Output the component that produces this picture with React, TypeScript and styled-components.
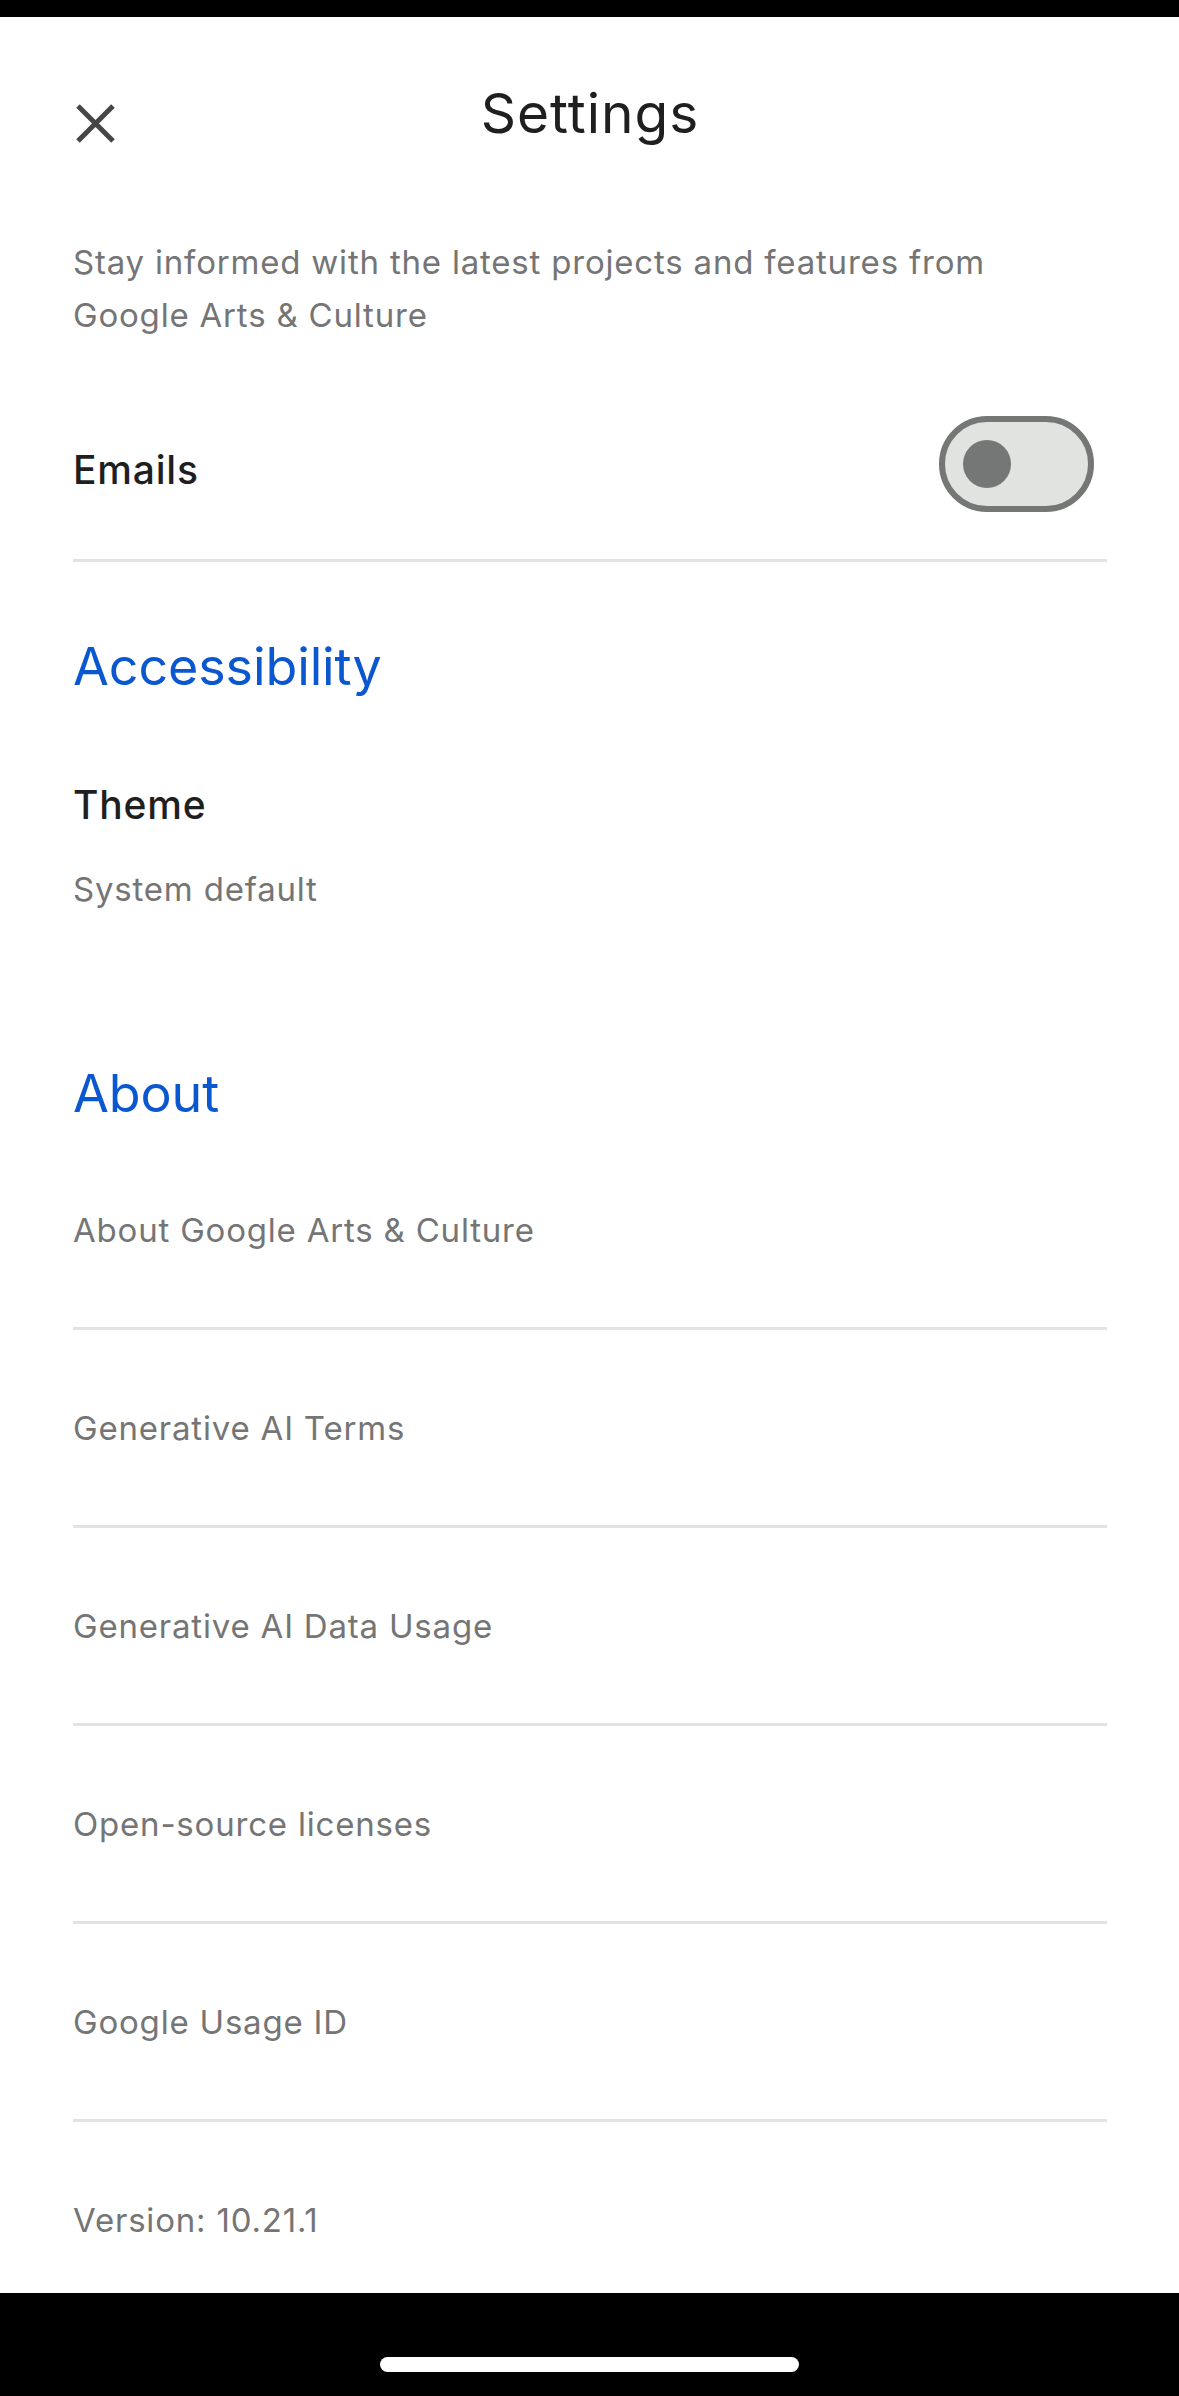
import styled, { createGlobalStyle } from 'styled-components';

const GlobalStyle = createGlobalStyle`
    html, body {
        margin: 0;
        padding: 0;
        background: #000;
    }
    body {
        font-family: Inter, "Noto Sans", sans-serif;
        -webkit-font-smoothing: antialiased;
    }
`;

const Screen = styled.div`
    width: 1179px;
    height: 2396px;
    display: flex;
    flex-direction: column;
    background-color: #ffffff;
    overflow: hidden;
`;
const StatusBar = styled.div`
    height: 17px;
    flex-shrink: 0;
    background-color: #000;
`;
const Content = styled.div`
    flex: 1;
    overflow: hidden;
    display: flex;
    flex-direction: column;
    padding: 0 72px 0 73px;
`;
const Header = styled.header`
    display: grid;
    grid-template-columns: 1fr auto 1fr;
    align-items: start;
    padding-top: 63px;
`;
const CloseButton = styled.button`
    justify-self: start;
    margin: 24px 0 0 3px;
    padding: 0;
    width: 39px;
    height: 39px;
    border: none;
    background: none;
    display: flex;
    cursor: pointer;
`;
const Title = styled.h1`
    margin: 0;
    font-size: 55px;
    line-height: 66px;
    font-weight: 400;
    color: #1f1f1f;
    letter-spacing: 1px;
`;
const Intro = styled.p`
    margin: 90px 0 0;
    max-width: 960px;
    font-size: 33px;
    line-height: 53px;
    color: #757575;
    letter-spacing: 0.8px;
`;
const ToggleRow = styled.div`
    display: flex;
    align-items: center;
    justify-content: space-between;
    margin-top: 74px;
    padding-bottom: 47px;
    border-bottom: 3px solid #e3e3e3;
`;
const RowLabel = styled.span`
    font-size: 39px;
    line-height: 48px;
    font-weight: 500;
    color: #1f1f1f;
    padding-top: 12px;
    letter-spacing: 0.8px;
`;
const Switch = styled.div<{ on?: boolean }>`
    box-sizing: border-box;
    width: 155px;
    height: 96px;
    margin-right: 13px;
    border-radius: 48px;
    border: 6px solid #747775;
    background-color: #e1e3e1;
    display: flex;
    align-items: center;
    justify-content: ${(props) => (props.on ? 'flex-end' : 'flex-start')};
    padding: 0 18px;
`;
const Knob = styled.div`
    width: 48px;
    height: 48px;
    border-radius: 50%;
    background-color: #747775;
`;
const SectionTitle = styled.h2<{ gap: number }>`
    margin: ${(props) => props.gap}px 0 0;
    font-size: 52px;
    line-height: 63px;
    font-weight: 400;
    color: #0b57d0;
    letter-spacing: -0.1px;
`;
const Setting = styled.div`
    margin-top: 83px;
    display: flex;
    flex-direction: column;
    gap: 40px;
`;
const SettingName = styled.span`
    font-size: 39px;
    line-height: 48px;
    font-weight: 500;
    color: #1f1f1f;
    letter-spacing: 0.8px;
`;
const SettingValue = styled.span`
    font-size: 33px;
    line-height: 40px;
    color: #757575;
    letter-spacing: 0.8px;
`;
const LinkList = styled.div`
    margin-top: 7px;
    display: flex;
    flex-direction: column;
`;
const LinkRow = styled.div<{ last?: boolean }>`
    height: 195px;
    flex-shrink: 0;
    display: flex;
    align-items: center;
    font-size: 33px;
    line-height: 40px;
    color: #757575;
    letter-spacing: 0.8px;
    border-bottom: ${(props) => (props.last ? 'none' : '3px solid #e3e3e3')};
`;
const NavBar = styled.div`
    height: 103px;
    flex-shrink: 0;
    background-color: #000;
    display: flex;
    justify-content: center;
    padding-top: 64px;
    box-sizing: border-box;
`;
const HomePill = styled.div`
    width: 419px;
    height: 15px;
    border-radius: 8px;
    background-color: #fff;
`;

const links = [
    'About Google Arts & Culture',
    'Generative AI Terms',
    'Generative AI Data Usage',
    'Open-source licenses',
    'Google Usage ID',
];

function App() {
    return (
        <>
            <GlobalStyle />
            <Screen>
                <StatusBar />
                <Content>
                    <Header>
                        <CloseButton aria-label="Close">
                            <svg width="39" height="39" viewBox="0 0 39 39">
                                <path d="M2 2 L37 37 M37 2 L2 37" stroke="#444746" strokeWidth="5" />
                            </svg>
                        </CloseButton>
                        <Title>Settings</Title>
                        <div />
                    </Header>
                    <Intro>Stay informed with the latest projects and features from Google Arts &amp; Culture</Intro>
                    <ToggleRow>
                        <RowLabel>Emails</RowLabel>
                        <Switch>
                            <Knob />
                        </Switch>
                    </ToggleRow>
                    <SectionTitle gap={73}>Accessibility</SectionTitle>
                    <Setting>
                        <SettingName>Theme</SettingName>
                        <SettingValue>System default</SettingValue>
                    </Setting>
                    <SectionTitle gap={153}>About</SectionTitle>
                    <LinkList>
                        {links.map((label) => (
                            <LinkRow key={label}>{label}</LinkRow>
                        ))}
                        <LinkRow last>Version: 10.21.1</LinkRow>
                    </LinkList>
                </Content>
                <NavBar>
                    <HomePill />
                </NavBar>
            </Screen>
        </>
    );
}

export default App;
